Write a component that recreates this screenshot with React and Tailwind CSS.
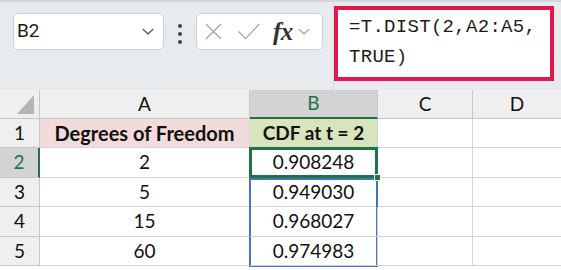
const rowsData = [
  { n: 2, v: "0.908248" },
  { n: 5, v: "0.949030" },
  { n: 15, v: "0.968027" },
  { n: 60, v: "0.974983" },
];

const Chevron = ({ className }) => (
  <svg viewBox="0 0 14 8" className={className} fill="none" stroke="currentColor" strokeWidth="1.4">
    <path d="M1 1.2 L7 6.8 L13 1.2" />
  </svg>
);

const App = () => {
  const rowH = ["h-[29px]", "h-[30px]", "h-[29px]", "h-[30px]", "h-[29px]"];
  return (
    <div className="w-[561px] h-[270px] overflow-hidden bg-white font-['Lato',sans-serif] text-[#111]">
      {/* formula bar */}
      <div className="h-[90px] bg-[#e8ebee] border-t-[2px] border-[#d3d7db] flex items-start relative">
        <div className="ml-[13px] mt-[11px] w-[151px] h-[37px] bg-white border border-[#cdd1d5] rounded-[5px] flex items-center justify-between pl-[3px] pr-[9px]">
          <span className="font-['Roboto',sans-serif] text-[19px] text-[#1b1b1b]">B2</span>
          <Chevron className="w-[12px] h-[7px] text-[#3b3b3b]" />
        </div>
        <div className="ml-[14px] mt-[22px] flex flex-col gap-[4px]">
          <span className="block w-[4px] h-[4px] rounded-full bg-[#444]" />
          <span className="block w-[4px] h-[4px] rounded-full bg-[#444]" />
          <span className="block w-[4px] h-[4px] rounded-full bg-[#444]" />
        </div>
        <div className="ml-[14px] mt-[11px] w-[127px] h-[37px] bg-white border border-[#cdd1d5] rounded-[5px] flex items-center pl-[8px]">
          <svg viewBox="0 0 18 18" className="w-[17px] h-[17px]" stroke="#a3a3a3" strokeWidth="1.3" fill="none">
            <path d="M1 1 L17 17 M17 1 L1 17" />
          </svg>
          <svg viewBox="0 0 24 18" className="ml-[15px] w-[24px] h-[17px]" stroke="#a3a3a3" strokeWidth="1.3" fill="none">
            <path d="M1 9 L8.5 16.5 L23 1" />
          </svg>
          <span className="ml-[12px] font-['Liberation_Serif',serif] italic font-bold text-[25px] leading-none text-[#333] tracking-[-0.5px]">fx</span>
          <Chevron className="ml-[5px] w-[12px] h-[7px] text-[#9a9a9a]" />
        </div>
        <div className="ml-[10px] h-[88px] border-l border-[#d4d8dc] flex items-start">
          <div className="mt-[4px] w-[220px] h-[75px] border-[4px] border-[#e0194a] bg-white pl-[11px] pt-[2px] font-['Liberation_Mono',monospace] text-[19px] leading-[30px] tracking-[0.3px] text-[#1c1c1c]">
            <div>=T.DIST(2,A2:A5,</div>
            <div>TRUE)</div>
          </div>
        </div>
      </div>

      {/* sheet */}
      <div className="grid grid-cols-[40px_210px_128px_95px_88px] text-[19px]">
        {/* header row */}
        <div className="h-[29px] bg-[#efefef] border-r border-b border-[#c6c6c6] relative">
          <svg viewBox="0 0 17 19" className="absolute right-[5px] bottom-[4px] w-[17px] h-[19px]">
            <path d="M17 0 L17 19 L0 19 Z" fill="#b5b5b5" />
          </svg>
        </div>
        <div className="h-[29px] bg-[#efefef] border-r border-b border-[#c6c6c6] flex items-center justify-center">A</div>
        <div className="h-[29px] bg-[#d3d3d3] border-r border-[#c6c6c6] border-b-[2px] border-b-[#217346] flex items-center justify-center text-[#217346]">B</div>
        <div className="h-[29px] bg-[#efefef] border-r border-b border-[#c6c6c6] flex items-center justify-center">C</div>
        <div className="h-[29px] bg-[#efefef] border-b border-[#c6c6c6] flex items-center justify-center">D</div>

        {/* row 1 */}
        <div className={`${rowH[0]} bg-[#efefef] border-r border-b border-[#c6c6c6] flex items-center justify-center`}>1</div>
        <div className={`${rowH[0]} bg-[#f2dcdb] border-r border-b border-[#d4d4d4] flex items-center justify-center font-bold text-[20px]`}>Degrees of Freedom</div>
        <div className={`${rowH[0]} bg-[#d8e4bc] border-r border-b border-[#d4d4d4] flex items-center justify-center font-bold text-[19px]`}>CDF at t = 2</div>
        <div className={`${rowH[0]} border-r border-b border-[#d4d4d4]`} />
        <div className={`${rowH[0]} border-b border-[#d4d4d4]`} />

        {rowsData.map((r, i) => {
          const sel = i === 0;
          return [
            <div
              key={`h${i}`}
              className={`${rowH[i + 1]} border-b border-[#c6c6c6] flex items-center justify-center ${
                sel ? "bg-[#d3d3d3] text-[#217346] border-r-[2px] border-r-[#217346]" : "bg-[#efefef] border-r"
              }`}
            >
              {i + 2}
            </div>,
            <div key={`a${i}`} className={`${rowH[i + 1]} border-r border-b border-[#d4d4d4] flex items-center justify-center`}>
              {r.n}
            </div>,
            <div key={`b${i}`} className={`${rowH[i + 1]} border-r border-b border-[#d4d4d4] flex items-center justify-center relative`}>
              {r.v}
              {sel && (
                <>
                  <div className="absolute left-[-1px] top-[-1px] right-[-1px] bottom-[-1px] border-[3px] border-[#217346]" />
                  <div className="absolute right-[-4px] bottom-[-4px] w-[7px] h-[7px] bg-[#217346] border border-white z-10" />
                </>
              )}
              {i === 1 && (
                <div className="absolute left-[-1px] right-[-1px] top-[0px] h-[89px] border-[2px] border-[#4472c4] pointer-events-none" />
              )}
            </div>,
            <div key={`c${i}`} className={`${rowH[i + 1]} border-r border-b border-[#d4d4d4]`} />,
            <div key={`d${i}`} className={`${rowH[i + 1]} border-b border-[#d4d4d4]`} />,
          ];
        })}
      </div>
    </div>
  );
};

export default App;
